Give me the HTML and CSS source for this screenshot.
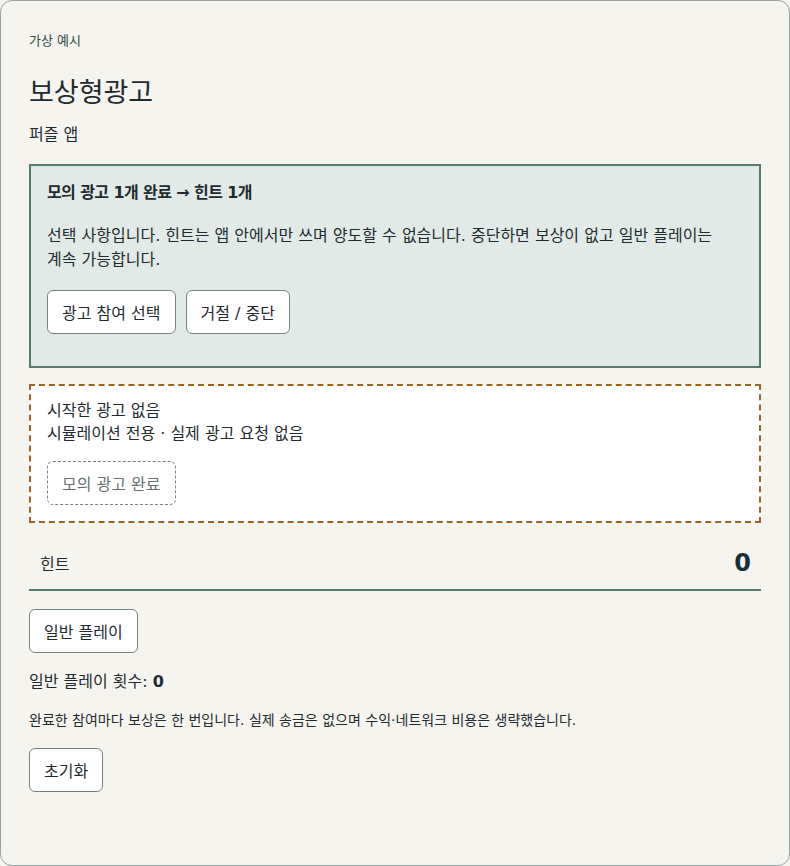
FILE: index.html
```html
<!DOCTYPE html>
<html lang="ko">
<head>
    <meta charset="UTF-8">
    <meta name="viewport" content="width=device-width, initial-scale=1.0">
    <title>보상형광고</title>
    <link rel="stylesheet" href="styles.css">
</head>
<body>
    <main class="app">
        <p class="eyebrow">가상 예시</p>
        <h1>보상형광고</h1>
        <p class="app-name">퍼즐 앱</p>

        <section class="offer">
            <h2 class="offer-title">모의 광고 1개 완료 → 힌트 1개</h2>
            <p class="offer-text">선택 사항입니다. 힌트는 앱 안에서만 쓰며 양도할 수 없습니다. 중단하면 보상이 없고 일반 플레이는 계속 가능합니다.</p>
            <div class="actions">
                <button type="button" class="btn">광고 참여 선택</button>
                <button type="button" class="btn">거절 / 중단</button>
            </div>
        </section>

        <section class="sim">
            <p class="sim-status">시작한 광고 없음<br>시뮬레이션 전용 · 실제 광고 요청 없음</p>
            <button type="button" class="btn btn-dashed" disabled>모의 광고 완료</button>
        </section>

        <div class="hint-row">
            <span class="hint-label">힌트</span>
            <strong class="hint-count">0</strong>
        </div>

        <button type="button" class="btn">일반 플레이</button>
        <p class="play-count">일반 플레이 횟수: <strong>0</strong></p>
        <p class="note">완료한 참여마다 보상은 한 번입니다. 실제 송금은 없으며 수익·네트워크 비용은 생략했습니다.</p>
        <button type="button" class="btn">초기화</button>
    </main>
</body>
</html>
```

FILE: styles.css
```css
* {
    box-sizing: border-box;
}

body {
    margin: 0;
    font-family: "DejaVu Sans", "Noto Sans CJK KR", sans-serif;
    font-size: 16px;
    color: #1e2b30;
    background: #f5f4ef;
    word-break: keep-all;
}

.app {
    min-height: 100vh;
    padding: 28px 28px 40px;
    border: 1px solid #9aa4a0;
    border-radius: 12px;
    background: #f5f4ef;
}

.eyebrow {
    margin: 0 0 22px;
    font-size: 13px;
    line-height: 24px;
    color: #2c4a44;
}

h1 {
    margin: 0 0 12px;
    font-size: 27px;
    font-weight: 400;
    line-height: 36px;
}

.app-name {
    margin: 0 0 17px;
    line-height: 24px;
}

.offer {
    padding: 15px 16px 32px;
    border: 2px solid #557a70;
    background: #e1eae6;
}

.offer-title {
    margin: 0 0 19px;
    font-size: 16px;
    font-weight: 600;
    line-height: 24px;
    letter-spacing: -0.6px;
}

.offer-text {
    margin: 0 0 18px;
    line-height: 24px;
}

.actions {
    display: flex;
    gap: 10px;
}

.btn {
    height: 44px;
    padding: 0 14px;
    border: 1px solid #728580;
    border-radius: 6px;
    background: #fff;
    font-family: inherit;
    font-size: 16px;
    color: #1e2b30;
}

.btn-dashed {
    border-style: dashed;
    background: transparent;
    color: #667370;
}

.sim {
    margin-top: 16px;
    padding: 13px 16px 16px;
    border: 2px dashed #9a6424;
    background: #fff;
}

.sim-status {
    margin: 0 0 16px;
    line-height: 23px;
}

.hint-row {
    display: flex;
    justify-content: space-between;
    align-items: center;
    margin: 16px 0 18px;
    padding: 10px 10px 12px 11px;
    border-bottom: 2px solid #557a70;
}

.hint-count {
    font-size: 24px;
    font-weight: 700;
    color: #15303a;
}

.play-count {
    margin: 17px 0 14px;
    line-height: 24px;
}

.note {
    margin: 0 0 16px;
    font-size: 14px;
    line-height: 24px;
}
```
